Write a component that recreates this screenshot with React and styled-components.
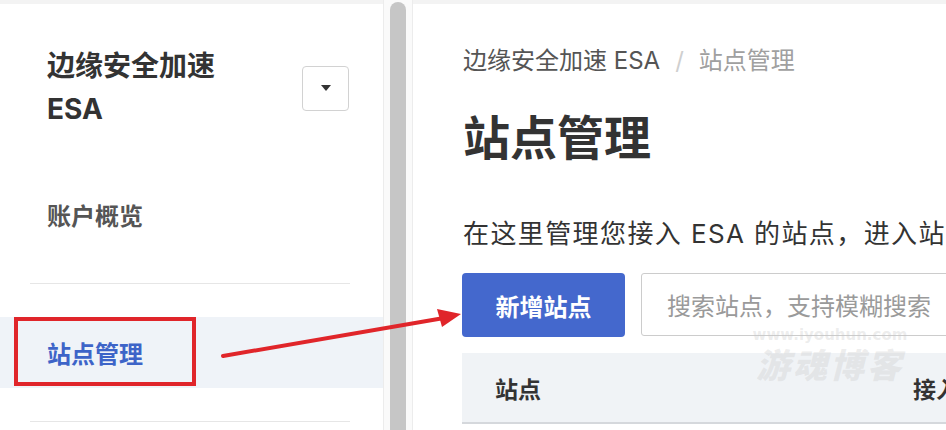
import React from "react";
import styled, { createGlobalStyle } from "styled-components";

const Global = createGlobalStyle`
  html, body { margin: 0; padding: 0; background: #fff; }
  body { font-family: "Inter", "Noto Sans CJK SC", sans-serif; color: #333; }
  * { box-sizing: border-box; }
`;

const Page = styled.div`
  position: relative;
  width: 946px;
  height: 430px;
  display: flex;
  overflow: hidden;
  background: #fff;
`;

const Sidebar = styled.aside`
  width: 383px;
  flex: none;
  border-top: 4px solid #f3f3f3;
  padding-top: 41px;
  display: flex;
  flex-direction: column;
`;

const Header = styled.div`
  display: flex;
  align-items: center;
  justify-content: space-between;
  padding: 0 34px 0 47px;
`;

const Product = styled.div`
  font-size: 28px;
  line-height: 43px;
  font-weight: 700;
  color: #333;
`;

const DropButton = styled.button`
  width: 47px;
  height: 45px;
  border: 1px solid #d2d2d2;
  border-radius: 4px;
  background: #fff;
  display: flex;
  align-items: center;
  justify-content: center;
  padding: 0;
  &::after {
    content: "";
    border-left: 5px solid transparent;
    border-right: 5px solid transparent;
    border-top: 6px solid #333;
  }
`;

const Nav = styled.nav`
  margin-top: 48px;
  display: flex;
  flex-direction: column;
`;

const NavItem = styled.div`
  height: 71px;
  display: flex;
  align-items: center;
  padding-left: 47px;
  font-size: 24px;
  font-weight: 700;
  color: ${(p) => (p.$active ? "#3d64c8" : "#555")};
  background: ${(p) => (p.$active ? "#eff3f8" : "transparent")};
`;

const Divider = styled.div`
  height: 1px;
  margin: 33px 33px 33px 30px;
  background: #e6e6e6;
`;

const ScrollTrack = styled.div`
  width: 30px;
  flex: none;
  border-left: 1px solid #ececec;
  border-right: 1px solid #ececec;
  background: #fafafa;
  padding: 2px 6px 0;
`;

const ScrollThumb = styled.div`
  height: 100%;
  background: #c6c6c6;
  border-radius: 8px 8px 0 0;
`;

const Main = styled.main`
  flex: 1;
  min-width: 0;
  border-top: 4px solid #f3f3f3;
  padding: 41px 0 0 49px;
  overflow: hidden;
`;

const Breadcrumb = styled.div`
  display: flex;
  align-items: center;
  gap: 15px;
  font-size: 24px;
  line-height: 32px;
  padding-left: 1px;
  white-space: nowrap;
`;

const Crumb = styled.span`
  color: ${(p) => (p.$current ? "#a0a0a0" : "#555")};
`;

const Slash = styled.span`
  color: #cfcfcf;
`;

const Title = styled.h1`
  margin: 33px 0 0;
  padding-left: 1px;
  font-size: 47px;
  line-height: 56px;
  font-weight: 700;
  color: #333;
`;

const Desc = styled.p`
  margin: 50px 0 0;
  padding-left: 1px;
  font-size: 26px;
  line-height: 36px;
  letter-spacing: 1.4px;
  color: #333;
  white-space: nowrap;
`;

const Toolbar = styled.div`
  margin-top: 21px;
  display: flex;
  gap: 16px;
  height: 64px;
`;

const Primary = styled.button`
  width: 163px;
  height: 64px;
  flex: none;
  border: none;
  border-radius: 4px;
  background: #4468cd;
  color: #fff;
  font-family: inherit;
  font-size: 24px;
  font-weight: 700;
`;

const Search = styled.div`
  flex: none;
  width: 400px;
  height: 63px;
  border: 1px solid #cccccc;
  border-radius: 3px;
  display: flex;
  align-items: center;
  padding-left: 25px;
  font-size: 24px;
  color: #9a9a9a;
  white-space: nowrap;
`;

const TableHead = styled.div`
  margin-top: 16px;
  width: 600px;
  height: 71px;
  background: #f0f3f6;
  border-bottom: 2px solid #d5d8dc;
  display: flex;
  align-items: center;
  font-size: 23px;
  font-weight: 700;
  color: #333;
  white-space: nowrap;
`;

const Col = styled.div`
  width: ${(p) => p.$w}px;
  padding-left: ${(p) => p.$pl}px;
  flex: none;
`;

const Highlight = styled.div`
  position: absolute;
  left: 14px;
  top: 317px;
  width: 182px;
  height: 69px;
  border: 4px solid #e0252a;
`;

const Arrow = styled.svg`
  position: absolute;
  left: 0;
  top: 0;
  pointer-events: none;
`;

const Watermark = styled.div`
  position: absolute;
  left: 752px;
  top: 326px;
  width: 156px;
  display: flex;
  flex-direction: column;
  align-items: center;
  color: rgba(200, 200, 200, 0.32);
  pointer-events: none;
`;

const WmUrl = styled.div`
  font-family: "DejaVu Sans", sans-serif;
  font-weight: 700;
  font-size: 15px;
  line-height: 18px;
`;

const WmName = styled.div`
  font-family: "Noto Sans CJK SC", sans-serif;
  font-weight: 900;
  font-size: 34px;
  line-height: 40px;
  letter-spacing: 3px;
  font-style: italic;
`;

export default function App() {
  return (
    <>
      <Global />
      <Page>
        <Sidebar>
          <Header>
            <Product>
              边缘安全加速
              <br />
              ESA
            </Product>
            <DropButton aria-label="切换" />
          </Header>
          <Nav>
            <NavItem>账户概览</NavItem>
            <Divider />
            <NavItem $active>站点管理</NavItem>
            <Divider />
          </Nav>
        </Sidebar>
        <ScrollTrack>
          <ScrollThumb />
        </ScrollTrack>
        <Main>
          <Breadcrumb>
            <Crumb>边缘安全加速 ESA</Crumb>
            <Slash>/</Slash>
            <Crumb $current>站点管理</Crumb>
          </Breadcrumb>
          <Title>站点管理</Title>
          <Desc>在这里管理您接入 ESA 的站点，进入站点后可进行详细配置</Desc>
          <Toolbar>
            <Primary>新增站点</Primary>
            <Search>搜索站点，支持模糊搜索</Search>
          </Toolbar>
          <TableHead>
            <Col $w={451} $pl={33}>站点</Col>
            <Col $w={140} $pl={0}>接入方式</Col>
          </TableHead>
        </Main>
        <Highlight />
        <Arrow width="946" height="430" viewBox="0 0 946 430">
          <line x1="223" y1="356" x2="444" y2="318" stroke="#e0252a" strokeWidth="4" strokeLinecap="round" />
          <polygon points="461,314 437,309 442,327" fill="#e0252a" />
        </Arrow>
        <Watermark>
          <WmUrl>www.iyouhun.com</WmUrl>
          <WmName>游魂博客</WmName>
        </Watermark>
      </Page>
    </>
  );
}
